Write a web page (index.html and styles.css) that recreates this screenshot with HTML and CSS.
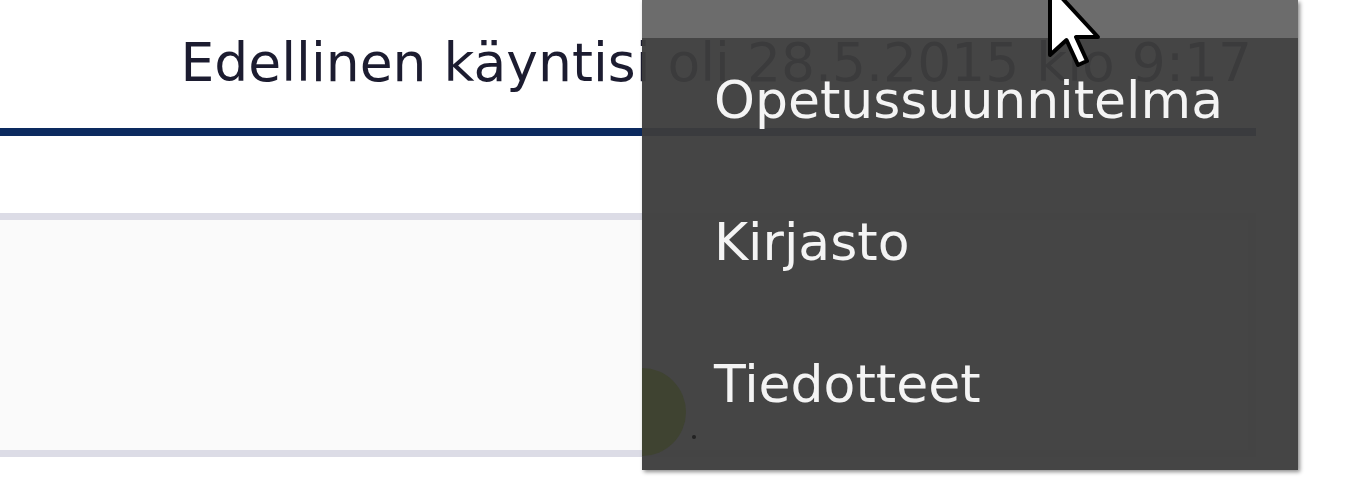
FILE: index.html
```html
<!DOCTYPE html>
<html lang="fi">
<head>
  <meta charset="UTF-8">
  <title>Etusivu</title>
  <link rel="stylesheet" href="styles.css">
</head>
<body>
  <div class="main">
    <div class="visit">Edellinen käyntisi oli 28.5.2015 klo 9:17</div>
    <div class="panel"></div>
  </div>

  <div class="menu">
    <div class="menu-top"></div>
    <span class="avatar"></span>
    <span class="dot"></span>
    <a class="menu-item" href="#">Opetussuunnitelma</a>
    <a class="menu-item" href="#">Kirjasto</a>
    <a class="menu-item" href="#">Tiedotteet</a>
  </div>

  <svg class="cursor" width="70" height="80" viewBox="0 0 14 16">
    <polygon points="1,-3 1,11 4.3,8 6.6,13 8.4,12.2 6.2,7.4 10.6,7.4" fill="#fff" stroke="#000" stroke-width="0.8" stroke-linejoin="round"/>
  </svg>
</body>
</html>
```

FILE: styles.css
```css
body {
  margin: 0;
  background: #fff;
  font-family: "DejaVu Sans", Verdana, sans-serif;
}
.main {
  width: 1256px;
}
.visit {
  height: 96px;
  padding: 32px 4px 0 0;
  text-align: right;
  font-size: 53.5px;
  color: #1c1c30;
  border-bottom: 8px solid #0c2a5f;
  line-height: 62px;
}
.panel {
  margin-top: 77px;
  height: 230px;
  background: #fafafa;
  border-top: 7px solid #dcdce6;
  border-bottom: 7px solid #dcdce6;
  border-right: 8px solid #dcdce6;
}
.menu {
  position: absolute;
  left: 642px;
  top: 0;
  width: 656px;
  height: 470px;
  background: rgba(61, 61, 61, 0.955);
  box-shadow: 2px 2px 4px rgba(0, 0, 0, 0.45);
  overflow: hidden;
}
.menu-top {
  height: 38px;
  background: #6c6c6c;
}
.menu-item {
  display: block;
  position: relative;
  height: 122px;
  padding: 20px 0 0 72px;
  font-size: 52px;
  line-height: 84px;
  color: #f4f4f4;
  text-decoration: none;
}
.avatar {
  position: absolute;
  left: -44px;
  top: 368px;
  width: 88px;
  height: 88px;
  border-radius: 50%;
  background: #3f4331;
}
.dot {
  position: absolute;
  left: 50px;
  top: 435px;
  width: 4px;
  height: 4px;
  border-radius: 50%;
  background: #222;
}
.cursor {
  position: absolute;
  left: 1045px;
  top: 0;
}
```
